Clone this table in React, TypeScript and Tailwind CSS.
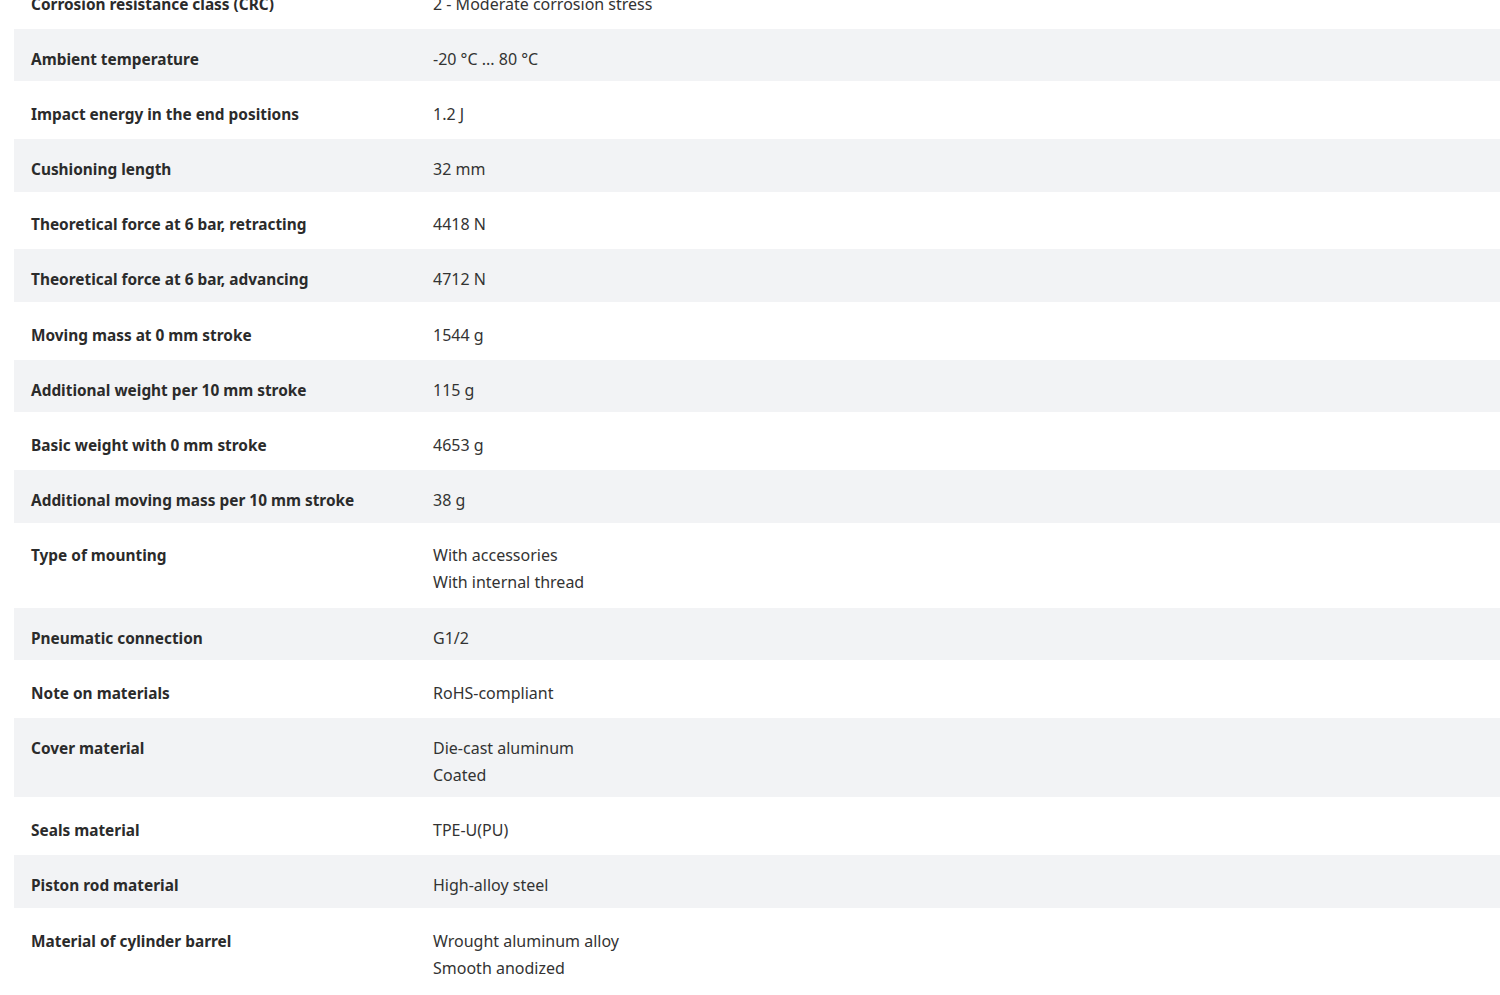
import React from "react";

type Row = { label: string; values: string[] };

const rows: Row[] = [
  { label: "Corrosion resistance class (CRC)", values: ["2 - Moderate corrosion stress"] },
  { label: "Ambient temperature", values: ["-20 °C ... 80 °C"] },
  { label: "Impact energy in the end positions", values: ["1.2 J"] },
  { label: "Cushioning length", values: ["32 mm"] },
  { label: "Theoretical force at 6 bar, retracting", values: ["4418 N"] },
  { label: "Theoretical force at 6 bar, advancing", values: ["4712 N"] },
  { label: "Moving mass at 0 mm stroke", values: ["1544 g"] },
  { label: "Additional weight per 10 mm stroke", values: ["115 g"] },
  { label: "Basic weight with 0 mm stroke", values: ["4653 g"] },
  { label: "Additional moving mass per 10 mm stroke", values: ["38 g"] },
  { label: "Type of mounting", values: ["With accessories", "With internal thread"] },
  { label: "Pneumatic connection", values: ["G1/2"] },
  { label: "Note on materials", values: ["RoHS-compliant"] },
  { label: "Cover material", values: ["Die-cast aluminum", "Coated"] },
  { label: "Seals material", values: ["TPE-U(PU)"] },
  { label: "Piston rod material", values: ["High-alloy steel"] },
  { label: "Material of cylinder barrel", values: ["Wrought aluminum alloy", "Smooth anodized"] },
];

export default function App() {
  return (
    <div
      className="w-[1500px] h-[995px] overflow-hidden bg-white text-[#333333]"
      style={{ fontFamily: "'Noto Sans', 'Open Sans', sans-serif" }}
    >
      <div className="mt-[-26.5px] pl-[14px] flex flex-col gap-[2.7px]">
        {rows.map((r, i) => (
          <div
            key={r.label}
            className={`flex pt-[17px] pb-[8.5px] leading-[27px] ${i % 2 === 1 ? "bg-[#f2f3f5]" : "bg-white"}`}
          >
            <div className="w-[419px] shrink-0 pl-[17px] text-[15.4px] font-bold text-[#2b2b2b]">
              {r.label}
            </div>
            <div className="flex-1 flex flex-col text-[16px] text-[#333333]">
              {r.values.map((v) => (
                <span key={v}>{v}</span>
              ))}
            </div>
          </div>
        ))}
      </div>
    </div>
  );
}
